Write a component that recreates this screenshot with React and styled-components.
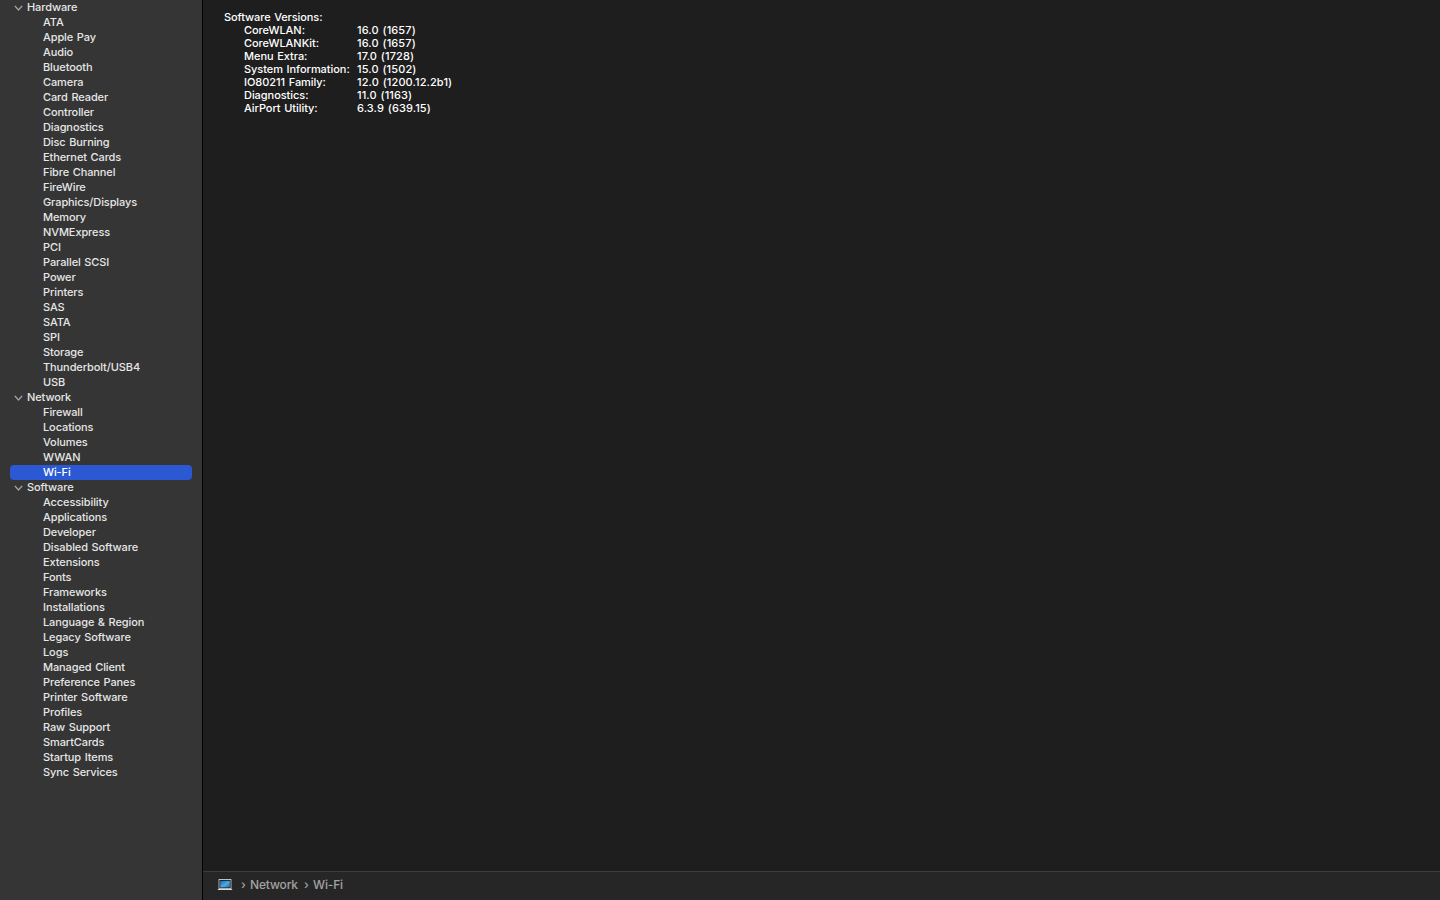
import styled, { createGlobalStyle } from "styled-components"

const GlobalStyle = createGlobalStyle`
  * {
    box-sizing: border-box;
  }

  body {
    margin: 0;
    background: #1e1e1e;
    font-family: Inter, "Liberation Sans", sans-serif;
  }
`

const Window = styled.div`
  display: flex;
  height: 900px;
  overflow: hidden;
`

const SidebarContainer = styled.nav`
  width: 203px;
  flex-shrink: 0;
  background: #353535;
  border-right: 1px solid #000;
  color: #e6e6e6;
  padding: 0 10px;
  font-size: 11px;
  font-weight: 500;
  line-height: 15px;
  letter-spacing: -0.1px;
  word-spacing: 0.8px;
  white-space: nowrap;
`

const SectionTitle = styled.div`
  display: flex;
  align-items: center;
  gap: 4px;
  height: 15px;
  padding-left: 4px;
`

const Chevron = styled.svg`
  width: 9px;
  height: 9px;
  margin-top: 2px;
  flex-shrink: 0;
`

const NavList = styled.ul`
  list-style: none;
  margin: 0;
  padding: 0;
`

const NavItem = styled.li`
  height: 15px;
  padding-left: 33px;
  border-radius: 4px;
  background: ${(props) => (props.$active ? "#2a59d3" : "transparent")};
  color: ${(props) => (props.$active ? "#ffffff" : "inherit")};
`

const Main = styled.main`
  display: flex;
  flex-direction: column;
  flex: 1;
  min-width: 0;
  background: #1e1e1e;
`

const Details = styled.section`
  flex: 1;
  padding: 11px 21px;
  color: #ffffff;
  font-size: 11px;
  font-weight: 500;
  line-height: 13px;
  letter-spacing: -0.1px;
  word-spacing: 0.8px;
`

const DetailsTitle = styled.div`
  height: 13px;
`

const Versions = styled.dl`
  display: grid;
  grid-template-columns: 113px auto;
  grid-auto-rows: 13px;
  margin: 0;
  padding-left: 20px;
  white-space: nowrap;
`

const VersionName = styled.dt`
  letter-spacing: -0.05px;
`

const VersionValue = styled.dd`
  margin: 0;
  letter-spacing: 0.1px;
`

const PathBar = styled.footer`
  display: flex;
  align-items: center;
  height: 29px;
  padding: 0 14px 3px;
  background: #262626;
  border-top: 1px solid #3d3d3d;
  color: #a3a3a3;
  font-size: 12px;
  font-weight: 500;
  line-height: 15px;
  letter-spacing: -0.15px;
`

const LaptopIcon = styled.svg`
  width: 16px;
  height: 12px;
  margin-right: 8px;
`

const Separator = styled.span`
  width: 9px;
`

const Crumb = styled.span`
  width: ${(props) => props.$width || "auto"};
  white-space: nowrap;
`

const sections = [
  {
    title: "Hardware",
    items: [
      "ATA",
      "Apple Pay",
      "Audio",
      "Bluetooth",
      "Camera",
      "Card Reader",
      "Controller",
      "Diagnostics",
      "Disc Burning",
      "Ethernet Cards",
      "Fibre Channel",
      "FireWire",
      "Graphics/Displays",
      "Memory",
      "NVMExpress",
      "PCI",
      "Parallel SCSI",
      "Power",
      "Printers",
      "SAS",
      "SATA",
      "SPI",
      "Storage",
      "Thunderbolt/USB4",
      "USB",
    ],
  },
  {
    title: "Network",
    items: ["Firewall", "Locations", "Volumes", "WWAN", "Wi-Fi"],
  },
  {
    title: "Software",
    items: [
      "Accessibility",
      "Applications",
      "Developer",
      "Disabled Software",
      "Extensions",
      "Fonts",
      "Frameworks",
      "Installations",
      "Language & Region",
      "Legacy Software",
      "Logs",
      "Managed Client",
      "Preference Panes",
      "Printer Software",
      "Profiles",
      "Raw Support",
      "SmartCards",
      "Startup Items",
      "Sync Services",
    ],
  },
]

const versions = [
  ["CoreWLAN:", "16.0 (1657)"],
  ["CoreWLANKit:", "16.0 (1657)"],
  ["Menu Extra:", "17.0 (1728)"],
  ["System Information:", "15.0 (1502)"],
  ["IO80211 Family:", "12.0 (1200.12.2b1)"],
  ["Diagnostics:", "11.0 (1163)"],
  ["AirPort Utility:", "6.3.9 (639.15)"],
]

const Sidebar = ({ selected }) => {
  return (
    <SidebarContainer>
      {sections.map((section) => (
        <div key={section.title}>
          <SectionTitle>
            <Chevron viewBox="0 0 9 9" fill="none" stroke="#a0a0a0" strokeWidth="1.3" strokeLinecap="round" strokeLinejoin="round">
              <path d="M1.2 2.3 4.5 6 7.8 2.3" />
            </Chevron>
            <span>{section.title}</span>
          </SectionTitle>
          <NavList>
            {section.items.map((item) => (
              <NavItem key={item} $active={item === selected}>
                {item}
              </NavItem>
            ))}
          </NavList>
        </div>
      ))}
    </SidebarContainer>
  )
}

const Laptop = () => {
  return (
    <LaptopIcon viewBox="0 0 16 12">
      <defs>
        <linearGradient id="screen" x1="0" y1="0" x2="1" y2="1">
          <stop offset="0" stopColor="#1769ad" />
          <stop offset="0.55" stopColor="#4fa9e2" />
          <stop offset="1" stopColor="#1c6cb3" />
        </linearGradient>
      </defs>
      <rect x="1.6" y="0" width="12.8" height="10" rx="0.6" fill="#d5d5d5" />
      <rect x="2.4" y="0.9" width="11.2" height="8.3" fill="#101820" />
      <rect x="3.2" y="1.8" width="9.6" height="6.7" fill="url(#screen)" />
      <path d="M0.5 10H15.5L14.8 11H1.2Z" fill="#d9d9d9" />
    </LaptopIcon>
  )
}

const App = () => {
  return (
    <>
      <GlobalStyle />
      <Window>
        <Sidebar selected="Wi-Fi" />
        <Main>
          <Details>
            <DetailsTitle>Software Versions:</DetailsTitle>
            <Versions>
              {versions.map(([name, version]) => [
                <VersionName key={name}>{name}</VersionName>,
                <VersionValue key={name + version}>{version}</VersionValue>,
              ])}
            </Versions>
          </Details>
          <PathBar>
            <Laptop />
            <Separator>›</Separator>
            <Crumb $width="54px">Network</Crumb>
            <Separator>›</Separator>
            <Crumb>Wi-Fi</Crumb>
          </PathBar>
        </Main>
      </Window>
    </>
  )
}

export default App
